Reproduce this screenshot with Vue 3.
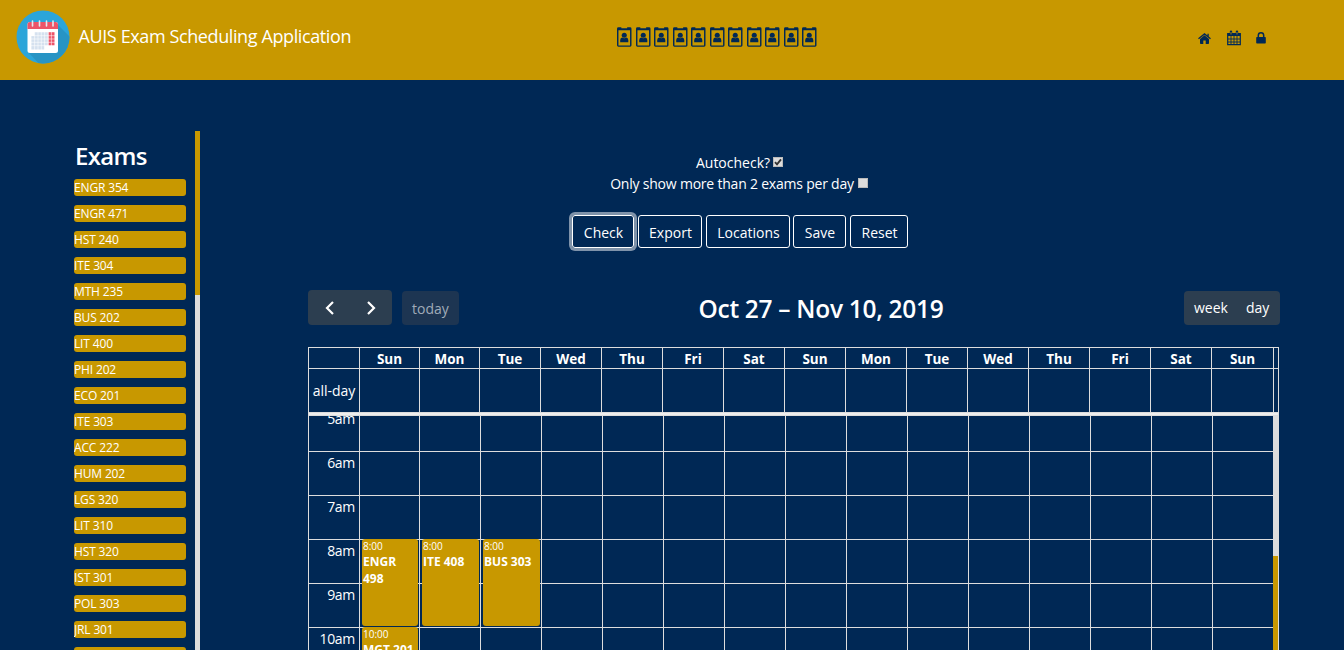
<script setup>
const exams = ['ENGR 354', 'ENGR 471', 'HST 240', 'ITE 304', 'MTH 235', 'BUS 202', 'LIT 400', 'PHI 202', 'ECO 201', 'ITE 303', 'ACC 222', 'HUM 202', 'LGS 320', 'LIT 310', 'HST 320', 'IST 301', 'POL 303', 'JRL 301', '']
const days = ['Sun', 'Mon', 'Tue', 'Wed', 'Thu', 'Fri', 'Sat', 'Sun', 'Mon', 'Tue', 'Wed', 'Thu', 'Fri', 'Sat', 'Sun']
const hours = ['5am', '6am', '7am', '8am', '9am', '10am']
const events = {
  '8am-1': { time: '8:00', name: 'ENGR 498' },
  '8am-2': { time: '8:00', name: 'ITE 408' },
  '8am-3': { time: '8:00', name: 'BUS 303' },
  '10am-1': { time: '10:00', name: 'MGT 201' }
}
</script>

<template>
  <div class="app">
    <header class="navbar">
      <div class="brand">
        <svg class="logo" viewBox="0 0 54 54">
          <defs><clipPath id="disc"><circle cx="27" cy="27" r="26.5" /></clipPath></defs>
          <circle cx="27" cy="27" r="26.5" fill="#2ba5d9" />
          <path clip-path="url(#disc)" d="M41 14 L60 33 V60 H29 L12 42z" fill="#2794c4" />
          <rect x="11.500" y="12" width="30.500" height="31" rx="2.500" fill="#fff" />
          <path d="M11.500 19v-4.500a2.500 2.500 0 0 1 2.500-2.500h25.500a2.500 2.500 0 0 1 2.500 2.500V19z" fill="#ed5468" />
          <path d="M16.500 11v5M23.500 11v5M30.500 11v5M37 11v5" stroke="#e3e9f0" stroke-width="1.600" stroke-linecap="round" />
          <path d="M18.500 22.200h13.500v13.300h-3.600v4h-13V26h3.100z" fill="#d5e1ef" />
          <path d="M32.500 22.200h6v13.300h-6z" fill="#ed5468" />
          <path d="M18.600 22v18M22 22v18M25.300 22v18M28.600 22v18M32 22v14M35.400 22v14M15 25.700h24M15 29h24M15 32.300h24M15 35.700h24" stroke="#fff" stroke-width=".7" fill="none" opacity=".8" />
        </svg>
        <span class="brand-name">AUIS Exam Scheduling Application</span>
      </div>
      <div class="badges">
        <svg v-for="n in 11" :key="n" class="badge" viewBox="0 0 15 20">
          <path d="M1.500 0H4.500V1H10.500V0H13.500Q15 0 15 1.500V18.500Q15 20 13.500 20H1.500Q0 20 0 18.500V1.500Q0 0 1.500 0zM1.500 3V18.700H13.500V3z" fill="#002855" fill-rule="evenodd" />
          <circle cx="7.500" cy="8.300" r="2.600" fill="#002855" />
          <path d="M3.300 15.500v-2.400Q3.500 10.700 5.300 10.500Q7.500 12 9.700 10.500Q11.500 10.700 11.700 13.100v2.400z" fill="#002855" />
        </svg>
      </div>
      <nav class="links">
        <svg class="home" viewBox="0 0 13 11" fill="#002855">
          <path d="M6.500 2.300 11 6v4.200q0 .8-.8.800H7.700V7.500H5.300V11H2.800Q2 11 2 10.200V6z" />
          <path d="M.5 5.800 6.500.9l6 4.900M10.100.8v2.800" fill="none" stroke="#002855" stroke-width="1.300" />
        </svg>
        <svg class="cal" viewBox="0 0 14 15" fill="none" stroke="#002855">
          <path d="M.7 2.700h12.600v11H.7z" stroke-width="1.200" />
          <path d="M.7 3h12.600v2H.7z" fill="#002855" stroke="none" />
          <path d="M4 5v9M7 5v9M10 5v9M1 8h12M1 11h12" stroke-width=".9" />
          <path d="M4 .6v3M10 .6v3" stroke-width="2.400" stroke-linecap="round" />
          <path d="M4 1v2.500M10 1v2.500" stroke="#c89800" stroke-width=".8" />
        </svg>
        <svg class="lock" viewBox="0 0 10 12">
          <rect x=".2" y="5" width="9.600" height="6.600" rx=".8" fill="#002855" />
          <path d="M2.300 5.500V3.500a2.700 2.700 0 0 1 5.400 0v2" fill="none" stroke="#002855" stroke-width="1.500" />
        </svg>
      </nav>
    </header>

    <div class="content">
      <aside class="sidebar">
        <div class="exam-list">
          <h4>Exams</h4>
          <div v-for="e in exams" :key="e" class="exam">{{ e }}</div>
        </div>
        <div class="track"><div class="thumb"></div></div>
      </aside>

      <main class="main">
        <div class="options">
          <label>
            <span class="auto">Autocheck?</span>
            <span class="box"><svg viewBox="0 0 10 10"><path d="M2 5.200 4 7.300 8 2.300" fill="none" stroke="#333" stroke-width="1.900" /></svg></span>
          </label>
          <label><span class="only">Only show more than 2 exams per day</span><span class="box"></span></label>
        </div>
        <div class="actions">
          <button class="check">Check</button>
          <button class="export">Export</button>
          <button class="locations">Locations</button>
          <button class="save">Save</button>
          <button class="reset">Reset</button>
        </div>

        <div class="toolbar">
          <div class="left">
            <div class="arrows">
              <svg viewBox="0 0 10 14"><path d="M8 1 2 7l6 6" /></svg>
              <svg viewBox="0 0 10 14"><path d="m2 1 6 6-6 6" /></svg>
            </div>
            <button class="today">today</button>
          </div>
          <h2>Oct 27 – Nov 10, 2019</h2>
          <div class="views"><span class="week">week</span><span class="day">day</span></div>
        </div>

        <div class="calendar">
          <div class="row head">
            <div class="cell"></div>
            <div v-for="(d, i) in days" :key="i" class="cell">{{ d }}</div>
            <div class="cell"></div>
          </div>
          <div class="row allday">
            <div class="cell"><span>all-day</span></div>
            <div v-for="(d, i) in days" :key="i" class="cell"></div>
            <div class="cell"></div>
          </div>
          <div class="divider"></div>
          <div class="scroller">
            <div class="slots">
              <div v-for="h in hours" :key="h" class="row slot">
                <div class="cell axis">{{ h }}</div>
                <div v-for="n in 15" :key="n" class="cell">
                  <div v-if="events[h + '-' + n]" class="event">
                    <div class="time">{{ events[h + '-' + n].time }}</div>
                    <div class="name">{{ events[h + '-' + n].name }}</div>
                  </div>
                </div>
              </div>
            </div>
            <div class="cal-track"><div class="cal-thumb"></div></div>
          </div>
        </div>
      </main>
    </div>
  </div>
</template>

<style>
body { margin: 0; background: #002855; overflow: hidden; }
</style>

<style scoped>
* { box-sizing: border-box; }
.app { width: 1344px; height: 650px; overflow: hidden; display: flex; flex-direction: column; background: #002855; color: #fff; font-family: "Open Sans", "Noto Sans", sans-serif; font-size: 14px; }
svg { display: block; flex: none; overflow: visible; }
button { font: inherit; color: #fff; margin: 0; padding: 0; }
.navbar { height: 80px; flex: none; background: #c89800; display: grid; grid-template-columns: 617px 581px 1fr; }
.brand { display: flex; align-items: flex-start; padding: 10px 0 0 15.500px; }
.logo { width: 54px; height: 54px; }
.brand-name { margin-left: 9px; font-size: 18px; line-height: 27px; padding-top: 13px; white-space: nowrap; letter-spacing: -.39px; }
.badges { display: flex; gap: 4.060px; padding-top: 27px; }
.badge { width: 14.500px; height: 20px; }
.links { display: flex; align-items: flex-start; padding-top: 31px; }
.home { width: 13px; height: 11px; margin-top: 2px; }
.cal { width: 14px; height: 15px; margin-left: 16px; }
.lock { width: 10px; height: 12px; margin: 1px 0 0 15px; }
.content { flex: 1; min-height: 0; display: flex; padding-top: 51px; }
.sidebar { width: 200px; flex: none; padding-left: 74px; display: flex; justify-content: space-between; }
.exam-list { width: 112px; height: 519px; overflow: hidden; }
h4 { margin: 0; font-size: 24px; font-weight: 600; line-height: 30px; height: 48px; padding: 10px 0 0 1px; letter-spacing: -.7px; }
.exam { height: 17px; line-height: 17px; margin-bottom: 9px; background: #c89800; border-radius: 3px; font-size: 12px; letter-spacing: -.15px; white-space: nowrap; }
.track { width: 5px; background: #ddd; height: 519px; }
.thumb { height: 164px; background: #c89800; }
.main { width: 972px; margin-left: 108px; padding-top: 21px; }
.options { height: 63px; display: flex; flex-direction: column; align-items: center; margin-left: -110px; }
label { display: flex; height: 21px; line-height: 22px; white-space: nowrap; }
.options label:first-child { padding-left: 1px; }
.auto { margin-right: 3px; }
.only { margin-right: 4px; letter-spacing: -.21px; }
.box { width: 10px; height: 10px; margin-top: 5px; background: #ddd; border: 1px solid #bbb; }
.box svg { width: 10px; height: 10px; margin: -1px; }
.actions { display: flex; gap: 4px; padding-left: 264px; height: 75px; }
.actions button { height: 33px; background: transparent; border: 1px solid #fff; border-radius: 3px; padding: 1px 0 0 1px; }
.actions .check { width: 62px; box-shadow: 0 0 0 3px #7f93aa; }
.export { width: 64px; }
.locations { width: 84px; }
.save { width: 53px; margin-left: -1px; }
.reset { width: 58px; }
.toolbar { height: 57px; display: grid; grid-template-columns: 364px 298px 310px; }
.left { display: flex; gap: 10px; }
.arrows { width: 84px; height: 35px; border-radius: 4px; background: #2c3e50; display: flex; padding: 11px 0 0 17px; gap: 31px; }
.arrows svg { width: 10px; height: 14px; fill: none; stroke: #fff; stroke-width: 2.200; }
.today { width: 57px; height: 34px; margin-top: 1px; border: 0; border-radius: 4px; background: #1d3552; color: #a0abb8; }
h2 { margin: 2px 0 0; text-align: center; font-size: 24.500px; font-weight: 600; line-height: 34px; white-space: nowrap; letter-spacing: -.3px; }
.views { justify-self: end; width: 96px; height: 34px; margin-top: 1px; border-radius: 4px; background: #2c3e50; line-height: 34px; display: flex; padding-left: 10px; gap: 18px; }
.calendar { width: 971px; height: 303px; border: 1px solid #ddd; border-bottom: 0; }
.row { display: grid; }
.cell { border-left: 1px solid #ddd; min-width: 0; }
.cell:first-child { border-left: 0; }
.head, .allday { grid-template-columns: 50px 60px 60px repeat(11, 61px) 61px 62px 5px; }
.head { height: 20px; font-weight: 700; font-size: 13.500px; line-height: 22px; text-align: center; }
.allday { height: 44px; border-top: 1px solid #ddd; line-height: 44px; text-align: center; }
.divider { height: 4px; background: #eee; border-top: 1px solid #ddd; border-bottom: 1px solid #ddd; }
.scroller { display: flex; height: 234px; overflow: hidden; }
.slots { width: 964px; flex: none; margin-top: -9px; }
.slot { height: 44px; grid-template-columns: 50px 60px repeat(14, 61px); border-top: 1px solid #ddd; }
.axis { text-align: right; padding-right: 4px; line-height: 22px; letter-spacing: -.3px; }
.slot .cell { height: 43px; }
.event { position: relative; z-index: 1; height: 87px; margin: -1px 1px 0 2px; padding: 1px 0 0 1px; background: #c89800; border-radius: 3px; line-height: 17px; }
.time { font-size: 10px; line-height: 12px; }
.name { font-size: 12px; font-weight: 700; line-height: 17px; padding-top: 1px; }
.cal-track { width: 5px; background: #ddd; height: 234px; padding-top: 140px; }
.cal-thumb { height: 94px; background: #c89800; }
</style>
